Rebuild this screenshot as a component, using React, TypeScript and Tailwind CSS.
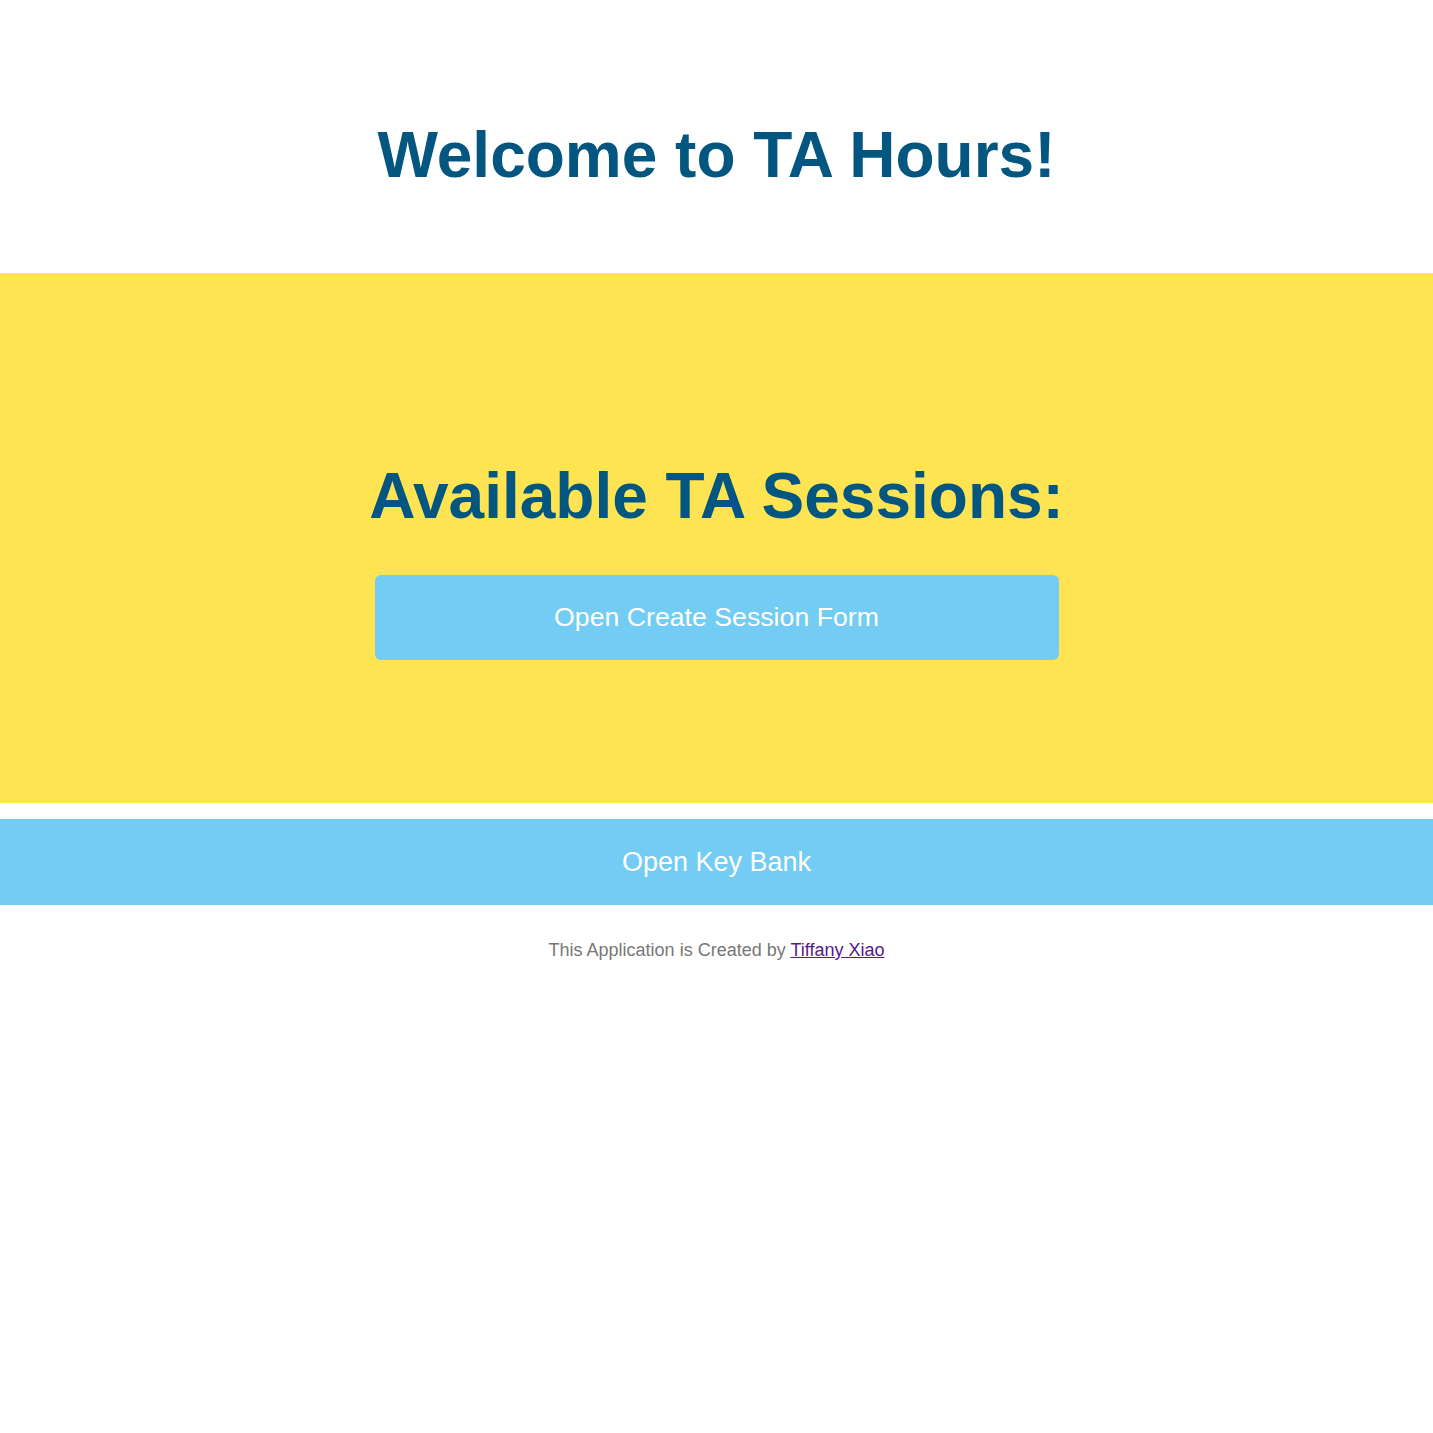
import React from "react";

const App: React.FC = () => {
  return (
    <div className="min-h-screen bg-white font-['Liberation_Sans',Arial,sans-serif]">
      <header className="flex justify-center pt-[118px] pb-[80px]">
        <h1 className="text-[64px] leading-[75px] font-bold text-[#03567f]">
          Welcome to TA Hours!
        </h1>
      </header>

      <section className="flex h-[530px] flex-col items-center bg-[#fee452] pt-[186px]">
        <h2 className="text-[64px] leading-[75px] font-bold text-[#03567f]">
          Available TA Sessions:
        </h2>
        <button className="mt-[41px] h-[85px] w-[684px] rounded-md bg-[#72ccf3] text-[26.7px] text-white">
          Open Create Session Form
        </button>
      </section>

      <button className="mt-4 flex h-[86px] w-full items-center justify-center bg-[#72ccf3] text-[27px] text-white">
        Open Key Bank
      </button>

      <footer className="mt-[32px] text-center text-[18px] text-[#777777]">
        This Application is Created by{" "}
        <a href="#" className="text-[#551a8b] underline">
          Tiffany Xiao
        </a>
      </footer>
    </div>
  );
};

export default App;
